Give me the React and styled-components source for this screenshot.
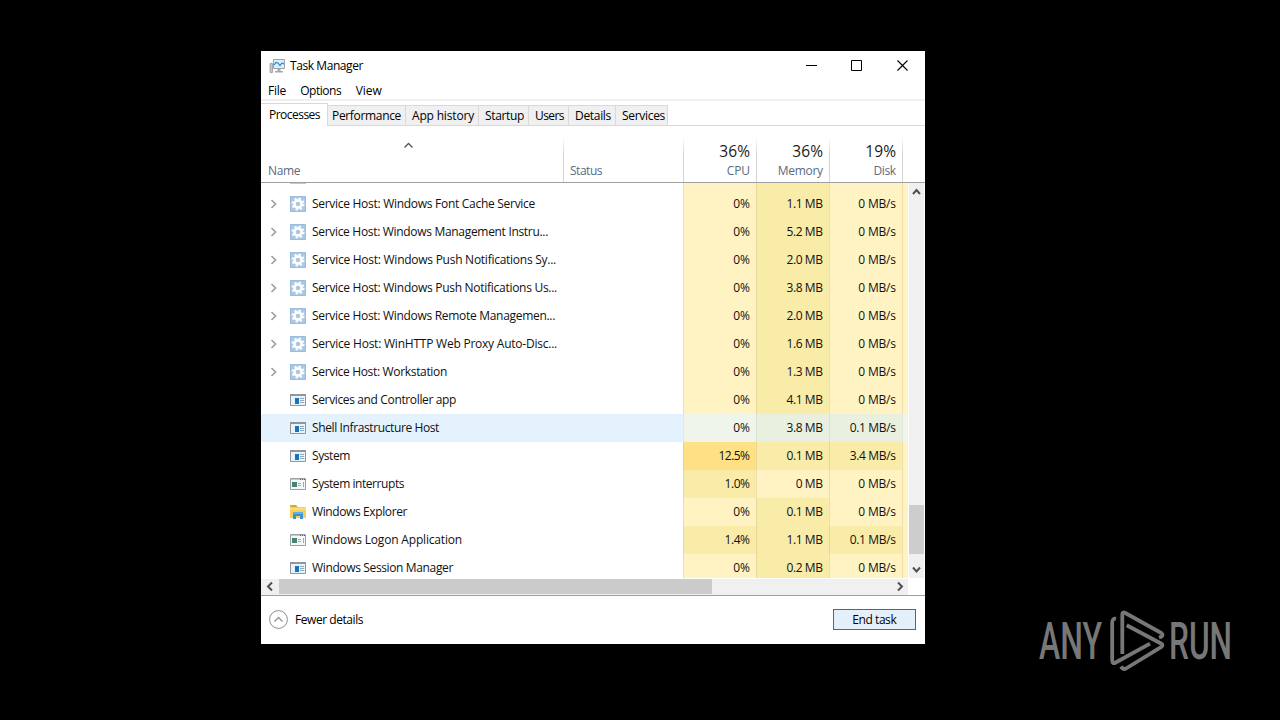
import React, { useLayoutEffect, useRef, useState } from "react";
import styled, { createGlobalStyle } from "styled-components";

const Global = createGlobalStyle`
  * { box-sizing: border-box; }
  body { margin: 0; background: #000; font: 12px/16px "Open Sans", "Noto Sans", sans-serif; color: #111; }
`;

const Desktop = styled.main`
  position: relative;
  width: 1280px;
  height: 720px;
  padding: 51px 0 0 261px;
  background: #000;
  overflow: hidden;
`;
const Window = styled.section`
  width: 664px;
  height: 593px;
  display: flex;
  flex-direction: column;
  background: #fff;
`;
const TitleBar = styled.header`
  height: 30px;
  flex: none;
  display: flex;
  align-items: center;
  padding: 0 17px 0 8px;
  color: #000;
`;
const Title = styled.div`
  flex: 1;
  padding-left: 4px;
`;
const Controls = styled.div`
  display: flex;
  gap: 35px;
  height: 30px;
  align-items: flex-start;
  padding-top: 9px;
  svg { display: block; }
  svg:first-child { margin-right: -1px; }
`;
const MenuBar = styled.nav`
  height: 20px;
  flex: none;
  display: flex;
  align-items: center;
  gap: 14px;
  padding: 2px 0 0 7px;
  border-bottom: 2px solid #f0f0f0;
  color: #000;
`;
const TabStrip = styled.div`
  height: 25px;
  flex: none;
  display: flex;
  align-items: flex-end;
  border-bottom: 1px solid #d9d9d9;
`;
const Tab = styled.div`
  width: ${(p) => p.$w}px;
  height: ${(p) => (p.$active ? 23 : 20)}px;
  margin-bottom: ${(p) => (p.$active ? -1 : 0)}px;
  padding: ${(p) => (p.$active ? 3 : 2)}px 0 0 ${(p) => p.$pad}px;
  background: ${(p) => (p.$active ? "#fff" : "#f0f0f0")};
  border: solid #d9d9d9;
  border-width: 1px 1px 0 0;
  color: #000;
`;
const Columns = styled.div`
  height: 57px;
  flex: none;
  display: flex;
  border-bottom: 1px solid #a0a0a0;
  color: #5a6b80;
`;
const HeadCell = styled.div`
  position: relative;
  width: ${(p) => p.$w}px;
  display: flex;
  flex-direction: column;
  justify-content: flex-end;
  align-items: ${(p) => (p.$right ? "flex-end" : "flex-start")};
  padding: 0 6px 3px 6px;
  border-left: 1px solid transparent;
  border-image: linear-gradient(to bottom, transparent 20%, ${(p) => (p.$first ? "transparent" : "#d4d4d4")} 50%) 1;
  border-width: 0 0 0 1px;
`;
const Total = styled.div`
  font-size: 15.5px;
  line-height: 20px;
  margin-bottom: 2px;
  color: #1c1c1c;
`;
const SortMark = styled.svg`
  position: absolute;
  left: 141px;
  top: 16px;
`;
const Body = styled.div`
  height: 395px;
  flex: none;
  display: flex;
`;
const Rows = styled.div`
  width: 647px;
  display: flex;
  flex-direction: column;
  overflow: hidden;
`;
const Row = styled.div`
  height: ${(p) => (p.$sliver ? 7 : 28)}px;
  flex: none;
  display: flex;
  background: ${(p) => (p.$hover ? "#e3f2fd" : "#fff")};
`;
const NameCell = styled.div`
  width: 422px;
  display: flex;
  align-items: center;
  padding-left: 8px;
`;
const Expander = styled.div`
  width: 21px;
  svg { display: block; }
`;
const IconBox = styled.div`
  width: 22px;
  height: 16px;
  svg { display: block; }
`;
const IconEdge = styled.div`
  align-self: flex-start;
  width: 16px;
  height: 1px;
  margin-left: 21px;
  background: #c4c8cc;
`;
const heat = { l: "#fff3c4", m: "#f9eba8", s: "#ffe185", hl: "#f0f5eb", hm: "#e9f0e0" };
const edge = { l: "#efdfae", m: "#e9d795", s: "#f3cf73", hl: "#e2e8da", hm: "#dbe3d0" };
const Value = styled.div`
  width: ${(p) => p.$w || 73}px;
  display: flex;
  align-items: center;
  justify-content: flex-end;
  padding-right: ${(p) => (p.$w ? 0 : 6)}px;
  background: ${(p) => heat[p.$heat]};
  border-left: 1px solid ${(p) => edge[p.$heat]};
`;
const VScroll = styled.div`
  width: 15px;
  margin-left: 1px;
  display: flex;
  flex-direction: column;
  background: #f0f0f0;
  svg { display: block; }
`;
const VThumb = styled.div`
  height: 49px;
  margin-top: 304px;
  background: #cdcdcd;
`;
const HScroll = styled.div`
  width: 647px;
  height: 17px;
  flex: none;
  display: flex;
  align-items: center;
  background: #f0f0f0;
  border-top: 1px solid #fff;
  svg { display: block; }
`;
const HThumb = styled.div`
  width: 433px;
  height: 15px;
  margin: 0 179px 1px 0;
  background: #cbcbcb;
`;
const Footer = styled.footer`
  flex: 1;
  display: flex;
  align-items: center;
  padding: 0 9px 2px 8px;
  border-top: 1px solid #a0a0a0;
  color: #000;
`;
const Fewer = styled.div`
  flex: 1;
  display: flex;
  align-items: center;
  gap: 7px;
`;
const FewerLabel = styled.div`
  padding-top: 2px;
`;
const EndTask = styled.button`
  width: 83px;
  height: 21px;
  padding: 1px 0 0;
  display: flex;
  align-items: center;
  justify-content: center;
  font: inherit;
  color: #000;
  background: #e3f0fa;
  border: 1px solid #1a7aae;
`;
const Watermark = styled.svg`
  position: absolute;
  left: 1036px;
  top: 596px;
`;
const Label = styled.span`
  display: inline-block;
  white-space: nowrap;
`;

// Tracks a label so that it takes up the given width.
function Fit({ w, children }) {
  const ref = useRef(null);
  const [gap, setGap] = useState(0);
  useLayoutEffect(() => {
    const natural = ref.current.getBoundingClientRect().width;
    setGap((w - natural) / children.length);
  }, []);
  return <Label ref={ref} style={{ letterSpacing: gap, marginRight: -gap }}>{children}</Label>;
}

const Chevron = ({ d, w = 9, h = 9, color = "#505050", sw = 2 }) => (
  <svg width={w} height={h} viewBox={`0 0 ${w} ${h}`} fill="none" stroke={color} strokeWidth={sw}>
    <path d={d} />
  </svg>
);

const Gear = () => (
  <svg width="16" height="16">
    <rect width="16" height="16" fill="#a9c8e6" />
    <path d="M.5.5h15v15H.5z" fill="none" stroke="#9dbbdb" />
    <circle cx="8" cy="8" r="5.500" fill="none" stroke="#fff" strokeWidth="2" strokeDasharray="2.16 2.16" />
    <circle cx="8" cy="8" r="3.600" fill="none" stroke="#fff" strokeWidth="2.600" />
  </svg>
);
const AppIcon = () => (
  <svg width="16" height="16">
    <path d="M.5 2.500h15v11H.5z" fill="#e8f4fc" stroke="#92969a" />
    <path d="M0 2h16v2H0z" fill="#92969a" />
    <path d="M5 6h4v6H5z" fill="#1674bd" />
    <path d="M10 6.500h4M10 8.500h4M10 10.500h4" stroke="#8fa9bf" />
  </svg>
);
const ConsoleIcon = () => (
  <svg width="16" height="16">
    <path d="M.5 2.500h15v11H.5z" fill="#f5f8f8" stroke="#9aa1a4" />
    <path d="M1 3.500h14" stroke="#c3c9cc" />
    <path d="M10 3.500h1M12 3.500h1M14 3.500h1" stroke="#59666a" />
    <path d="M2 6h5v5H2z" fill="#4b8373" />
    <path d="M8 7.500h3M8 9.500h3M13.500 6v5" stroke="#9cabad" />
  </svg>
);
const ExplorerIcon = () => (
  <svg width="16" height="16">
    <path d="M0 1h6l1.500 2H16v11H0z" fill="#f8cf58" />
    <path d="M0 1h6l1.500 2H1z" fill="#d9a42c" />
    <path d="M0 4h16v2H0z" fill="#fbdc78" />
    <path d="M3 15V8h10v7h-3v-3H6v3z" fill="#3d93cf" />
    <path d="M3 8h10v2H3z" fill="#5fb4e4" />
  </svg>
);
const ManagerIcon = () => (
  <svg width="17" height="16">
    <path d="M1 5.500h2.500v9H1z" fill="#c6c6c6" stroke="#999" strokeWidth=".8" />
    <path d="M4.500 1.500h11v9h-11z" fill="#d9effb" stroke="#9aa4aa" />
    <path d="M5 7l2-2.500 2 .5 2 2.500L13 5l2 1" fill="none" stroke="#2489c5" strokeWidth="1.200" />
    <path d="M8.500 11h3v2H14v1.500H6V13h2.500z" fill="#a4a9ad" />
  </svg>
);
const icons = { gear: Gear, app: AppIcon, console: ConsoleIcon, explorer: ExplorerIcon };

const processes = [
  ["gear", "Service Host: Windows Font Cache Service", 223, "0%", "1.1 MB", "0 MB/s", "lml"],
  ["gear", "Service Host: Windows Management Instru...", 236, "0%", "5.2 MB", "0 MB/s", "lml"],
  ["gear", "Service Host: Windows Push Notifications Sy...", 244, "0%", "2.0 MB", "0 MB/s", "lml"],
  ["gear", "Service Host: Windows Push Notifications Us...", 245, "0%", "3.8 MB", "0 MB/s", "lml"],
  ["gear", "Service Host: Windows Remote Managemen...", 243, "0%", "2.0 MB", "0 MB/s", "lml"],
  ["gear", "Service Host: WinHTTP Web Proxy Auto-Disc...", 245, "0%", "1.6 MB", "0 MB/s", "lml"],
  ["gear", "Service Host: Workstation", 135, "0%", "1.3 MB", "0 MB/s", "lml"],
  ["app", "Services and Controller app", 144, "0%", "4.1 MB", "0 MB/s", "lml"],
  ["app", "Shell Infrastructure Host", 127, "0%", "3.8 MB", "0.1 MB/s", "lmm", true],
  ["app", "System", 38, "12.5%", "0.1 MB", "3.4 MB/s", "smm"],
  ["console", "System interrupts", 92, "1.0%", "0 MB", "0 MB/s", "mll"],
  ["explorer", "Windows Explorer", 95, "0%", "0.1 MB", "0 MB/s", "lml"],
  ["console", "Windows Logon Application", 150, "1.4%", "1.1 MB", "0.1 MB/s", "mmm"],
  ["app", "Windows Session Manager", 141, "0%", "0.2 MB", "0 MB/s", "lml"],
];
const valueWidths = { "0%": 16.5, "12.5%": 31, "1.0%": 25, "1.4%": 25, "0 MB": 27, "0 MB/s": 37.5, "0.1 MB/s": 46, "3.4 MB/s": 46 };

const tabs = [["Performance", 78, 69, 4], ["App history", 73, 62, 6], ["Startup", 50, 39, 6], ["Users", 40, 29, 6], ["Details", 47, 36, 6], ["Services", 52, 43, 6]];
const totals = [["36%", "CPU", 23], ["36%", "Memory", 45], ["19%", "Disk", 22]];

function ProcessRow({ data }) {
  const [icon, name, width, cpu, mem, disk, levels, hover] = data;
  const Icon = icons[icon];
  const level = (i) => (hover ? "h" : "") + levels[i];
  return (
    <Row $hover={hover}>
      <NameCell>
        <Expander>{icon === "gear" && <Chevron d="M2.500 1l4 4-4 4" h={10} color="#a0a0a0" sw={1.700} />}</Expander>
        <IconBox><Icon /></IconBox>
        <Fit w={width}>{name}</Fit>
      </NameCell>
      {[cpu, mem, disk].map((v, i) => (
        <Value key={i} $heat={level(i)}><Fit w={valueWidths[v] || 36}>{v}</Fit></Value>
      ))}
      <Value $w={6} $heat={hover ? "hl" : "l"} />
    </Row>
  );
}

export default function App() {
  return (
    <Desktop>
      <Global />
      <Window>
        <TitleBar>
          <ManagerIcon />
          <Title><Fit w={73}>Task Manager</Fit></Title>
          <Controls>
            <svg width="11" height="11"><path d="M0 5.500h11" stroke="#000" /></svg>
            <svg width="11" height="11"><path d="M.5.5h10v10H.5z" fill="none" stroke="#000" /></svg>
            <svg width="11" height="11"><path d="M.5.5l10 10M10.500.5l-10 10" stroke="#000" strokeWidth="1.100" /></svg>
          </Controls>
        </TitleBar>
        <MenuBar>
          <Fit w={18}>File</Fit>
          <Fit w={41}>Options</Fit>
          <Fit w={26}>View</Fit>
        </MenuBar>
        <TabStrip>
          <Tab $active $w={67} $pad={8}><Fit w={51}>Processes</Fit></Tab>
          {tabs.map(([t, w, tw, pad]) => <Tab key={t} $w={w} $pad={pad}><Fit w={tw}>{t}</Fit></Tab>)}
        </TabStrip>
        <Columns>
          <HeadCell $w={302} $first>
            <SortMark width="11" height="7" fill="none" stroke="#555" strokeWidth="1.300"><path d="M1.500 5.500l4-4 4 4" /></SortMark>
            <Fit w={32}>Name</Fit>
          </HeadCell>
          <HeadCell $w={120}><Fit w={32}>Status</Fit></HeadCell>
          {totals.map(([pct, label, w]) => (
            <HeadCell key={label} $w={73} $right>
              <Total><Fit w={31}>{pct}</Fit></Total>
              <Fit w={w}>{label}</Fit>
            </HeadCell>
          ))}
          <HeadCell $w={20} />
        </Columns>
        <Body>
          <Rows>
            <Row $sliver>
              <NameCell><IconEdge /></NameCell>
              <Value $heat="l" /><Value $heat="m" /><Value $heat="l" /><Value $w={6} $heat="l" />
            </Row>
            {processes.map((p) => <ProcessRow key={p[1]} data={p} />)}
          </Rows>
          <VScroll>
            <Chevron d="M4 11l3.500-4 3.500 4" w={15} h={18} />
            <VThumb />
            <Chevron d="M4 13.500l3.500 4 3.500-4" w={15} h={24} />
          </VScroll>
        </Body>
        <HScroll>
          <Chevron d="M11 3.500l-4 4 4 4" w={18} h={16} />
          <HThumb />
          <Chevron d="M7 3.500l4 4-4 4" w={17} h={16} />
        </HScroll>
        <Footer>
          <Fewer>
            <svg width="19" height="19" fill="none">
              <circle cx="9.500" cy="9.500" r="8.900" stroke="#8c8c8c" />
              <path d="M5.500 11.500l4-4 4 4" stroke="#999" strokeWidth="1.500" />
            </svg>
            <FewerLabel><Fit w={68}>Fewer details</Fit></FewerLabel>
          </Fewer>
          <EndTask><Fit w={44}>End task</Fit></EndTask>
        </Footer>
      </Window>
      <Watermark width="244" height="90" viewBox="0 -10 244 90" fill="#777" fontFamily="Roboto, sans-serif" fontWeight="500" fontSize="51">
        <text x="3" y="53" textLength="63" lengthAdjust="spacingAndGlyphs">ANY</text>
        <text x="133" y="53" textLength="63" lengthAdjust="spacingAndGlyphs">RUN</text>
        <g fill="none" stroke="#777" strokeWidth="3.800" strokeLinejoin="round">
          <path d="M86.300 48V8.500q0-3 3-1.500l36 20q2.500 2 0 3.800l-2.300.7" />
          <path d="M80 12.700q-3.800-.5-3.800 4V54q0 4.500 3.500 2.500L114 37.700" />
          <path d="M90.700 19.300L125 37.500q3 1.800 0 3.700L90 62.500q-3 1.500-5-2" />
        </g>
      </Watermark>
    </Desktop>
  );
}
